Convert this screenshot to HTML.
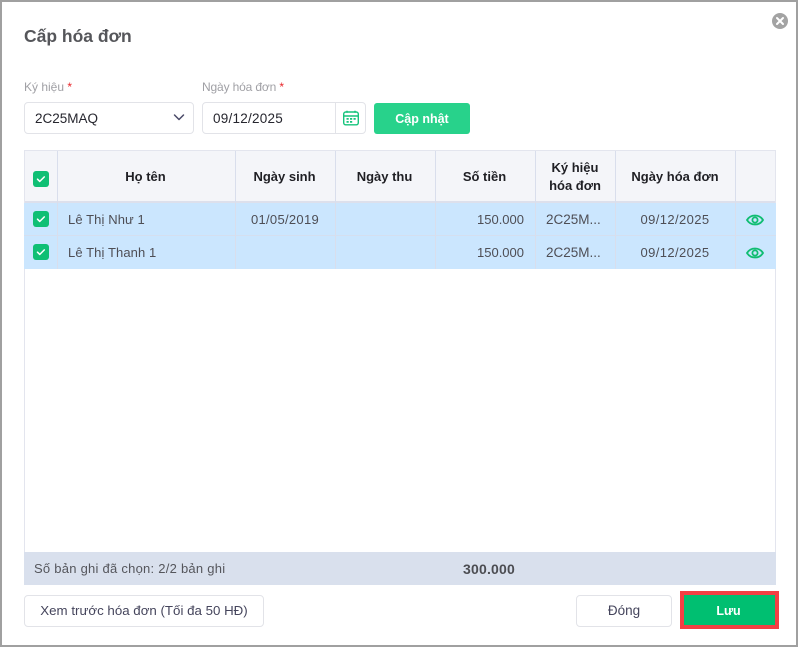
<!DOCTYPE html>
<html><head><meta charset="utf-8">
<style>
*{box-sizing:border-box}
html,body{margin:0;padding:0;width:798px;height:647px;overflow:hidden;background:#fff;font-family:"Liberation Sans",sans-serif}
.a{position:absolute}
.t{position:absolute;white-space:nowrap;font-size:13px;line-height:18px;color:#4e4e55}
.c{text-align:center}
.r{text-align:right}
.n{letter-spacing:.3px}
.h{font-weight:bold;color:#1f1f24;font-size:13px}
.v{position:absolute;width:1px;background:#d9deec}
.ck{position:absolute;width:16px;height:16px;left:33px}
.eye{position:absolute;left:746px;width:18px;height:12px}
</style></head><body>
<div class="a" style="left:0;top:0;width:798px;height:647px;background:#a0a0a0"></div>
<div class="a" style="left:2px;top:2px;width:794px;height:643px;background:#fff"></div>

<div class="t" style="left:24px;top:25px;font-size:17.5px;line-height:22px;font-weight:bold;color:#55565a">Cấp hóa đơn</div>
<svg class="a" style="left:772px;top:13px" width="16" height="16" viewBox="0 0 16 16"><circle cx="8" cy="8" r="8" fill="#a3a3a3"/><path d="M5 5l6 6M11 5l-6 6" stroke="#fff" stroke-width="2" stroke-linecap="round"/></svg>

<div class="t" style="left:24px;top:78px;font-size:12px;color:#a0a0a5">Ký hiệu <span style="color:#e8262a">*</span></div>
<div class="t" style="left:202px;top:78px;font-size:12px;letter-spacing:-.15px;color:#a0a0a5">Ngày hóa đơn <span style="color:#e8262a">*</span></div>

<div class="a" style="left:24px;top:102px;width:170px;height:32px;border:1px solid #e2e3e8;border-radius:4px"></div>
<div class="t" style="left:35px;top:110px;font-size:13.5px;color:#26262e">2C25MAQ</div>
<svg class="a" style="left:173px;top:113px" width="12" height="9" viewBox="0 0 12 9"><path d="M1.500 2l4.500 4.500L10.500 2" fill="none" stroke="#4a4a68" stroke-width="1.500" stroke-linecap="round" stroke-linejoin="round"/></svg>

<div class="a" style="left:202px;top:102px;width:164px;height:32px;border:1px solid #e2e3e8;border-radius:4px"></div>
<div class="a" style="left:335px;top:103px;width:1px;height:30px;background:#e2e3e8"></div>
<div class="t" style="left:213px;top:110px;font-size:13.5px;color:#26262e;letter-spacing:.25px">09/12/2025</div>
<svg class="a" style="left:343px;top:110px" width="16" height="16" viewBox="0 0 16 16"><rect x=".7" y="2" width="14.600" height="12.800" rx="2" fill="none" stroke="#16c47c" stroke-width="1.400"/><path d="M.7 6h14.600M4 .8v2M12 .8v2" stroke="#16c47c" stroke-width="1.500" fill="none"/><path d="M3.500 8h2.200v1.800h-2.200zM7 8h2.200v1.800H7zM10.500 8h2.200v1.800h-2.200zM3.500 11h2.200v1.800h-2.200zM7 11h2.200v1.800H7z" fill="#16c47c"/></svg>

<div class="a" style="left:374px;top:103px;width:96px;height:31px;background:#28d28b;border-radius:3px"></div>
<div class="t c" style="left:374px;top:110px;width:96px;color:#fff;font-weight:bold;font-size:12.500px">Cập nhật</div>

<!-- table -->
<div class="a" style="left:24px;top:150px;width:752px;height:435px;border:1px solid #e3e5ee;border-bottom:0"></div>
<div class="a" style="left:25px;top:151px;width:750px;height:51px;background:#f4f5f9"></div>
<div class="a" style="left:25px;top:201px;width:750px;height:2px;background:#dde0ec"></div>
<div class="a" style="left:24px;top:203px;width:752px;height:66px;background:#cbe6fe"></div>
<div class="a" style="left:24px;top:235px;width:752px;height:1px;background:#d5dfef"></div>

<div class="v" style="left:57px;top:151px;height:118px"></div>
<div class="v" style="left:235px;top:151px;height:118px"></div>
<div class="v" style="left:335px;top:151px;height:118px"></div>
<div class="v" style="left:435px;top:151px;height:118px"></div>
<div class="v" style="left:535px;top:151px;height:118px"></div>
<div class="v" style="left:615px;top:151px;height:118px"></div>
<div class="v" style="left:735px;top:151px;height:118px"></div>

<svg class="ck" style="top:171px" viewBox="0 0 16 16"><rect width="16" height="16" rx="3" fill="#0fbf74"/><path d="M4.500 8.200l2.300 2.200 4.500-4.500" fill="none" stroke="#fff" stroke-width="1.500" stroke-linecap="round" stroke-linejoin="round"/></svg>
<svg class="ck" style="top:211px" viewBox="0 0 16 16"><rect width="16" height="16" rx="3" fill="#0fbf74"/><path d="M4.500 8.200l2.300 2.200 4.500-4.500" fill="none" stroke="#fff" stroke-width="1.500" stroke-linecap="round" stroke-linejoin="round"/></svg>
<svg class="ck" style="top:244px" viewBox="0 0 16 16"><rect width="16" height="16" rx="3" fill="#0fbf74"/><path d="M4.500 8.200l2.300 2.200 4.500-4.500" fill="none" stroke="#fff" stroke-width="1.500" stroke-linecap="round" stroke-linejoin="round"/></svg>

<div class="t c h" style="left:58px;top:168px;width:175px">Họ tên</div>
<div class="t c h" style="left:236px;top:168px;width:97px">Ngày sinh</div>
<div class="t c h" style="left:336px;top:168px;width:97px">Ngày thu</div>
<div class="t c h" style="left:436px;top:168px;width:97px">Số tiền</div>
<div class="t c h" style="left:536px;top:159px;width:78px">Ký hiệu</div>
<div class="t c h" style="left:536px;top:177px;width:78px">hóa đơn</div>
<div class="t c h" style="left:616px;top:168px;width:118px">Ngày hóa đơn</div>

<div class="t" style="left:68px;top:211px;letter-spacing:.1px">Lê Thị Như 1</div>
<div class="t c n" style="left:236px;top:211px;width:98px">01/05/2019</div>
<div class="t r" style="left:436px;top:211px;width:88px">150.000</div>
<div class="t" style="left:546px;top:211px;font-size:13.500px">2C25M...</div>
<div class="t c n" style="left:616px;top:211px;width:118px;letter-spacing:.4px">09/12/2025</div>
<svg class="eye" style="top:214px" viewBox="0 0 18 12"><path d="M1 6C3 2.800 6 1.500 9 1.500s6 1.300 8 4.500c-2 3.200-5 4.500-8 4.500S3 9.200 1 6z" fill="none" stroke="#10bd72" stroke-width="1.800"/><circle cx="9" cy="6" r="2.600" fill="none" stroke="#10bd72" stroke-width="1.800"/></svg>

<div class="t" style="left:68px;top:244px;letter-spacing:.1px">Lê Thị Thanh 1</div>
<div class="t r" style="left:436px;top:244px;width:88px">150.000</div>
<div class="t" style="left:546px;top:244px;font-size:13.500px">2C25M...</div>
<div class="t c n" style="left:616px;top:244px;width:118px;letter-spacing:.4px">09/12/2025</div>
<svg class="eye" style="top:247px" viewBox="0 0 18 12"><path d="M1 6C3 2.800 6 1.500 9 1.500s6 1.300 8 4.500c-2 3.200-5 4.500-8 4.500S3 9.200 1 6z" fill="none" stroke="#10bd72" stroke-width="1.800"/><circle cx="9" cy="6" r="2.600" fill="none" stroke="#10bd72" stroke-width="1.800"/></svg>

<!-- footer row -->
<div class="a" style="left:24px;top:552px;width:752px;height:33px;background:#d9e0ed"></div>
<div class="t" style="left:34px;top:560px;font-size:13px;color:#55565c;letter-spacing:.25px">Số bản ghi đã chọn: 2/2 bản ghi</div>
<div class="t" style="left:463px;top:560px;font-weight:bold;color:#4c4d52;font-size:14px;letter-spacing:.2px">300.000</div>

<!-- buttons -->
<div class="a" style="left:24px;top:595px;width:240px;height:32px;border:1px solid #e2e3e8;border-radius:4px"></div>
<div class="t c" style="left:24px;top:602px;width:240px;font-size:13.300px;color:#45455c">Xem trước hóa đơn (Tối đa 50 HĐ)</div>
<div class="a" style="left:576px;top:595px;width:96px;height:32px;border:1px solid #e2e3e8;border-radius:4px"></div>
<div class="t c" style="left:576px;top:602px;width:96px;font-size:13.500px;color:#45455c">Đóng</div>

<div class="a" style="left:680px;top:591px;width:99px;height:38px;background:#00bf71;border:4px solid #f43f44"></div>
<div class="t c" style="left:680px;top:602px;width:97px;color:#fff;font-weight:bold;font-size:12.500px">Lưu</div>
</body></html>
